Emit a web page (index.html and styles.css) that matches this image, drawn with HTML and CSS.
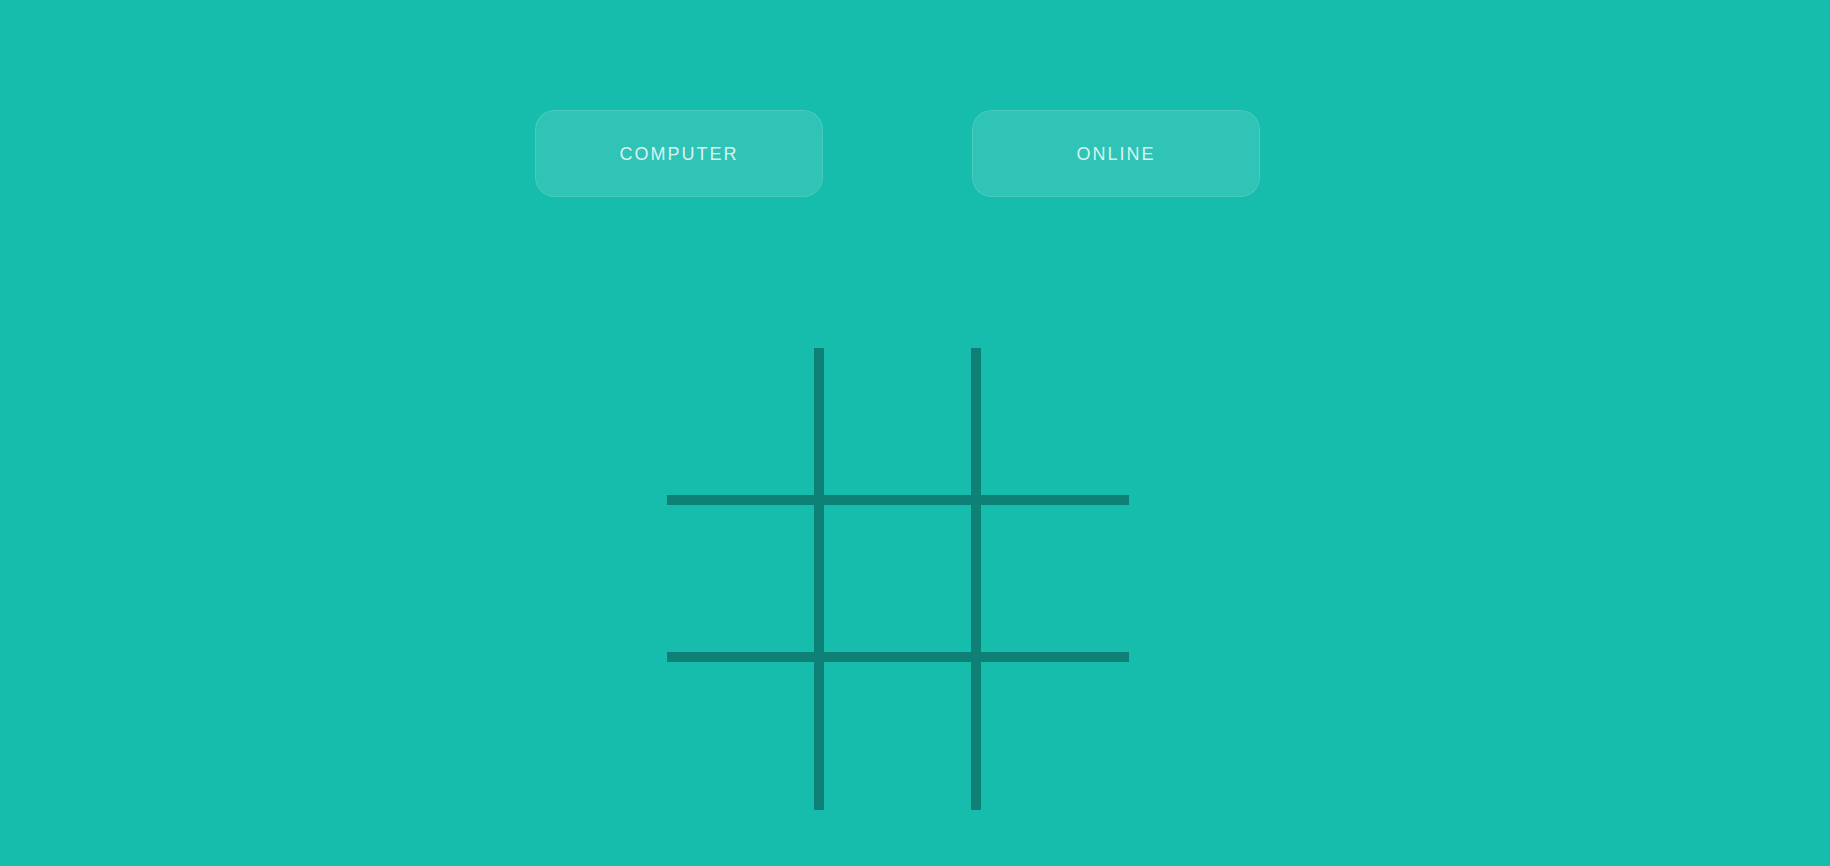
FILE: index.html
```html
<!DOCTYPE html>
<html>
<head>
<meta charset="utf-8">
<link rel="stylesheet" href="styles.css">
</head>
<body>
<div class="page">
  <div class="modes">
    <button class="mode">COMPUTER</button>
    <button class="mode">ONLINE</button>
  </div>
  <div class="board">
    <div class="cell"></div><div class="cell"></div><div class="cell"></div>
    <div class="cell"></div><div class="cell"></div><div class="cell"></div>
    <div class="cell"></div><div class="cell"></div><div class="cell"></div>
  </div>
</div>
</body>
</html>
```
FILE: styles.css
```css
html, body {
  margin: 0;
  padding: 0;
  background: #16bdad;
  height: 100%;
  overflow: hidden;
}
.page {
  width: 1796px;
  display: flex;
  flex-direction: column;
  align-items: center;
  padding-top: 110px;
}
.modes {
  display: flex;
  gap: 149px;
  margin-right: 1px;
}
.mode {
  width: 288px;
  height: 87px;
  border-radius: 20px;
  border: 1px solid rgba(255,255,255,0.12);
  background: rgba(255,255,255,0.11);
  color: rgba(255,255,255,0.82);
  font-family: "Liberation Sans", Arial, sans-serif;
  font-size: 18px;
  letter-spacing: 2px;
  padding: 2px 0 0 0;
  cursor: pointer;
}
.board {
  margin-top: 151px;
  display: grid;
  grid-template-columns: 147px 147px 148px;
  grid-template-rows: 147px 147px 148px;
  gap: 10px;
  background: #0f8075;
}
.cell {
  background: #16bdad;
}
```
